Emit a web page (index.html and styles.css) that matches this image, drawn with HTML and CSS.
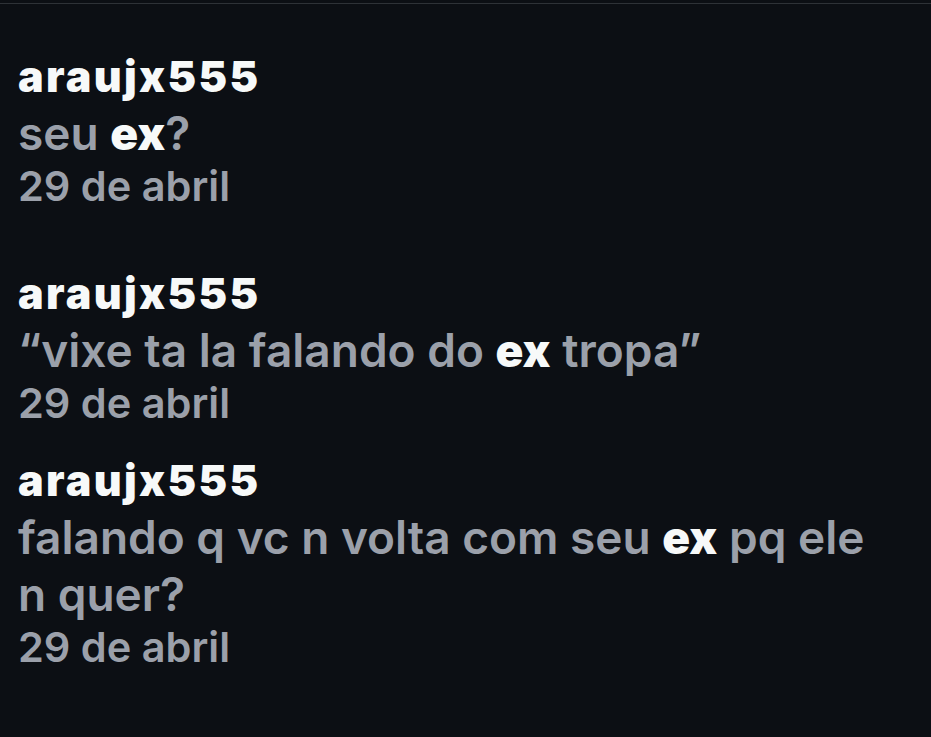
FILE: index.html
```html
<!DOCTYPE html>
<html lang="pt">
<head>
<meta charset="utf-8">
<link rel="stylesheet" href="styles.css">
</head>
<body>
<div class="screen">
  <div class="list">
    <div class="item item-first">
      <div class="user">araujx555</div>
      <div class="text">seu <b>ex</b>?</div>
      <div class="date">29 de abril</div>
    </div>
    <div class="item item-second">
      <div class="user">araujx555</div>
      <div class="text">“vixe ta la falando do <b>ex</b> tropa”</div>
      <div class="date">29 de abril</div>
    </div>
    <div class="item item-third">
      <div class="user">araujx555</div>
      <div class="text">falando q vc n volta com seu <b>ex</b> pq ele n quer?</div>
      <div class="date">29 de abril</div>
    </div>
  </div>
</div>
</body>
</html>
```
FILE: styles.css
```css
html, body {
  margin: 0;
  padding: 0;
  background: #0c0f14;
}
.screen {
  width: 931px;
  height: 737px;
  background: #0c0f14;
  border-top: 1px solid #2e3237;
  margin-top: 3px;
  box-sizing: border-box;
  overflow: hidden;
  font-family: Inter, "Liberation Sans", sans-serif;
}
.list {
  display: flex;
  flex-direction: column;
  padding: 47px 50px 0 18px;
}
.item {
  display: flex;
  flex-direction: column;
}
.item-second {
  margin-top: 57px;
}
.item-third {
  margin-top: 27px;
}
.user {
  color: #f7f9f9;
  font-weight: 900;
  font-size: 43px;
  line-height: 50px;
  letter-spacing: 2.3px;
  margin-bottom: 4px;
}
.text {
  color: #9ba0aa;
  font-size: 46px;
  line-height: 57px;
  font-weight: 600;
  letter-spacing: 0;
}
.text b {
  color: #f7f9f9;
  font-weight: 900;
}
.date {
  color: #9ba0aa;
  font-size: 41.5px;
  line-height: 49px;
  font-weight: 600;
}
```
